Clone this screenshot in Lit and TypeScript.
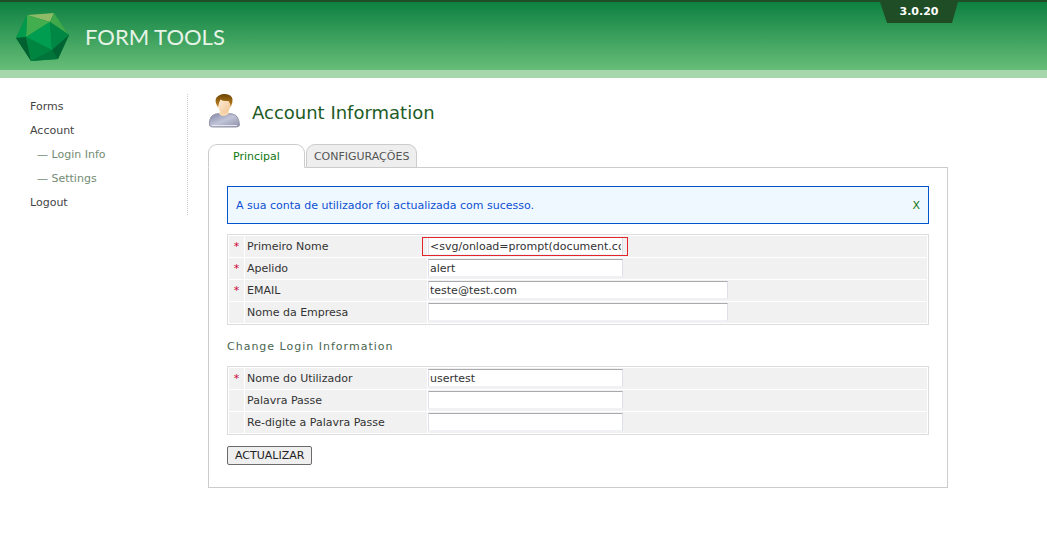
import { LitElement, html, css, svg, nothing } from "lit";
import { customElement, property } from "lit/decorators.js";

interface Field {
  id: string;
  label: string;
  value: string;
  required?: boolean;
  wide?: boolean;
  flagged?: boolean;
  type?: string;
}

const PERSONAL: Field[] = [
  { id: "first_name", label: "Primeiro Nome", value: "<svg/onload=prompt(document.cookie)>", required: true, flagged: true },
  { id: "last_name", label: "Apelido", value: "alert", required: true },
  { id: "email", label: "EMAIL", value: "teste@test.com", required: true, wide: true },
  { id: "company", label: "Nome da Empresa", value: "", wide: true },
];

const LOGIN: Field[] = [
  { id: "username", label: "Nome do Utilizador", value: "usertest", required: true },
  { id: "password", label: "Palavra Passe", value: "", type: "password" },
  { id: "password_2", label: "Re-digite a Palavra Passe", value: "", type: "password" },
];

@customElement("ft-header")
export class FtHeader extends LitElement {
  static styles = css`
    :host { display: block; }
    .bar {
      display: flex;
      justify-content: space-between;
      align-items: flex-start;
      box-sizing: border-box;
      height: 78px;
      border-top: 2px solid #1f4e26;
      border-bottom: 8px solid #a5d6ac;
      background: linear-gradient(#0d8141, #67bd77);
    }
    .brand { display: flex; align-items: center; gap: 15px; padding: 10px 0 0 15px; text-decoration: none; }
    .gem { display: block; width: 55px; height: 50px; }
    .name { font: 22px/28px Lato, sans-serif; color: #e6f3e7; }
    .version {
      box-sizing: border-box;
      width: 78px;
      height: 21px;
      margin-right: 89px;
      background: #1f4e26;
      clip-path: polygon(0 0, 100% 0, 72px 100%, 7px 100%);
      color: #fff;
      font: bold 11px/19px "DejaVu Sans", sans-serif;
      text-align: center;
    }
  `;
  render() {
    return html`<header class="bar">
      <a class="brand" href="#">
        <svg class="gem" viewBox="0 0 55 50" aria-hidden="true">
          <path d="M12 3 39 1 54 23 43 47 16 49 1 26Z" fill="#008542" />
          <path d="M12 3 39 1 35 10Z" fill="#8fba68" />
          <path d="M12 3 35 10 11 25Z" fill="#42ae4e" />
          <path d="M39 1 54 23 35 10Z" fill="#3fa84b" />
          <path d="M12 3 11 25 1 26Z" fill="#009a4d" />
          <path d="M35 10 37 38 11 25Z" fill="#009d50" />
          <path d="M35 10 54 23 37 38Z" fill="#008743" />
          <path d="M1 26 11 25 16 49Z" fill="#00602f" />
          <path d="M11 25 37 38 16 49Z" fill="#008541" />
          <path d="M16 49 37 38 43 47Z" fill="#007439" />
          <path d="M54 23 43 47 37 38Z" fill="#006331" />
        </svg>
        <span class="name">FORM TOOLS</span>
      </a>
      <div class="version">3.0.20</div>
    </header>`;
  }
}

@customElement("ft-fields")
export class FtFields extends LitElement {
  @property({ attribute: false }) fields: Field[] = [];
  static styles = css`
    :host { display: block; }
    .grid {
      width: 100%;
      table-layout: fixed;
      border: 1px solid #dddddd;
      border-collapse: separate;
      border-spacing: 1px;
    }
    .mark { width: 15px; color: #cc0033; text-align: center; }
    .label { width: 182px; text-align: left; font-weight: normal; }
    .mark, .label, .cell { height: 21px; padding: 0; background: #f1f1f1; }
    .label label { padding-left: 2px; }
    .cell { vertical-align: top; }
    .box { position: relative; display: flex; padding-top: 1px; }
    .input {
      box-sizing: border-box;
      width: 195px;
      height: 18px;
      padding: 0 1px;
      border: 1px solid #dde0ea;
      border-top-color: #a9a9ae;
      border-bottom-color: #eef1f5;
      border-radius: 0;
      background: #fff;
      color: #333;
      font: inherit;
      outline: none;
    }
    .wide { width: 300px; }
    .flag {
      position: absolute;
      top: 1px;
      left: -6px;
      box-sizing: border-box;
      width: 206px;
      height: 19px;
      border: 1px solid #e3242b;
      pointer-events: none;
    }
  `;
  render() {
    return html`<table class="grid">
      <tbody>
        ${this.fields.map(
          (f) => html`<tr>
            <td class="mark">${f.required ? "*" : nothing}</td>
            <th class="label" scope="row"><label for=${f.id}>${f.label}</label></th>
            <td class="cell">
              <div class="box">
                <input class="input ${f.wide ? "wide" : ""}" id=${f.id} type=${f.type ?? "text"} .value=${f.value} />
                ${f.flagged ? html`<span class="flag"></span>` : nothing}
              </div>
            </td>
          </tr>`
        )}
      </tbody>
    </table>`;
  }
}

const person = svg`
  <defs>
    <linearGradient id="hair" x1="0" y1="0" x2="0" y2="1">
      <stop offset="0" stop-color="#6b4400" /><stop offset="1" stop-color="#c88a28" />
    </linearGradient>
    <linearGradient id="coat" x1="0" y1="0" x2="1" y2="1">
      <stop offset="0" stop-color="#7f84a6" /><stop offset=".5" stop-color="#c2c5d8" /><stop offset="1" stop-color="#8d90a8" />
    </linearGradient>
    <linearGradient id="skin" x1="0" y1="0" x2="1" y2="1">
      <stop offset="0" stop-color="#fff0dc" /><stop offset="1" stop-color="#f0c08e" />
    </linearGradient>
  </defs>
  <path d="M1.500 32.500Q1 25 4.500 22.500Q7 20.500 12 20.500H20Q25 20.500 28 22.500Q31.500 26 31.500 32.500Q30.500 34 28 34H5Q2.500 34 1.500 32.500Z" fill="url(#coat)" stroke="#9596a8" />
  <path d="M4 32.500H29" stroke="#e4e6f0" />
  <path d="M11 20.500Q14 25.500 21 20.500L20 16H13Z" fill="#f8d8b0" />
  <path d="M10 9Q9.500 20 16 20.500Q22 20 23 10L20 5H13Z" fill="url(#skin)" />
  <path d="M10 14.500Q6 8 8.500 4.500Q12 0.500 17 1Q23.500 1.500 24.500 6Q25 10 22.500 14.500Q22.500 10 20.500 8Q15 8.500 12.500 6.500Q10.500 10 10 14.500Z" fill="url(#hair)" />
`;

@customElement("app-root")
export class AppRoot extends LitElement {
  static styles = css`
    :host {
      display: block;
      background: #fff;
      color: #333;
      font: 11px/13px "DejaVu Sans", sans-serif;
    }
    .page { display: flex; align-items: flex-start; padding: 15px 99px 47px 30px; }
    .nav {
      box-sizing: border-box;
      flex: none;
      width: 158px;
      margin: 1px 20px 0 0;
      padding-top: 1px;
      border-right: 1px dotted #cccccc;
    }
    .menu { margin: 0; padding: 0; list-style: none; }
    .link { display: block; line-height: 24px; color: #444444; text-decoration: none; }
    .sub { padding-left: 7px; color: #738b73; }
    .main { flex: 1; min-width: 0; }
    .head { display: flex; align-items: flex-end; gap: 12px; }
    .person { display: block; width: 32px; height: 36px; }
    .title { margin: 0; color: #215b26; font: 18px/32px "DejaVu Sans", sans-serif; }
    .tabs { position: relative; z-index: 1; display: flex; gap: 1px; margin: 15px 0 -1px; }
    .tab {
      box-sizing: border-box;
      height: 24px;
      padding: 0 7px;
      border: 1px solid #cccccc;
      border-radius: 9px 9px 0 0;
      background: #eeeeee;
      color: #555555;
      line-height: 23px;
      text-decoration: none;
    }
    .active { padding: 0 24px; border-bottom-color: #fff; background: #fff; color: #117711; }
    .panel { padding: 18px 18px 22px; border: 1px solid #cccccc; }
    .notice {
      display: flex;
      justify-content: space-between;
      align-items: center;
      box-sizing: border-box;
      height: 38px;
      margin-bottom: 10px;
      padding: 0 8px;
      border: 1px solid #0055cc;
      background: #f0f8ff;
      color: #0d50d2;
    }
    .close { color: #117711; text-decoration: none; }
    .section { margin: 15px 0 13px; color: #4a6650; font: inherit; letter-spacing: 1px; }
    .submit {
      display: block;
      height: 19px;
      margin-top: 11px;
      padding: 0 7px;
      border: 1px solid #6b6b6b;
      border-radius: 2px;
      background: #efefef;
      color: #222;
      font: inherit;
    }
  `;
  render() {
    return html`
      <ft-header></ft-header>
      <div class="page">
        <nav class="nav">
          <ul class="menu">
            <li><a class="link" href="#">Forms</a></li>
            <li><a class="link" href="#">Account</a></li>
            <li><a class="link sub" href="#">— Login Info</a></li>
            <li><a class="link sub" href="#">— Settings</a></li>
            <li><a class="link" href="#">Logout</a></li>
          </ul>
        </nav>
        <main class="main">
          <div class="head">
            <svg class="person" viewBox="0 0 32 36" aria-hidden="true">${person}</svg>
            <h1 class="title">Account Information</h1>
          </div>
          <div class="tabs">
            <a class="tab active" href="#">Principal</a>
            <a class="tab" href="#">CONFIGURAÇÕES</a>
          </div>
          <form class="panel" @submit=${(e: Event) => e.preventDefault()}>
            <div class="notice" role="status">
              <span>A sua conta de utilizador foi actualizada com sucesso.</span>
              <a class="close" href="#">X</a>
            </div>
            <ft-fields .fields=${PERSONAL}></ft-fields>
            <h2 class="section">Change Login Information</h2>
            <ft-fields .fields=${LOGIN}></ft-fields>
            <button class="submit" type="submit">ACTUALIZAR</button>
          </form>
        </main>
      </div>
    `;
  }
}
